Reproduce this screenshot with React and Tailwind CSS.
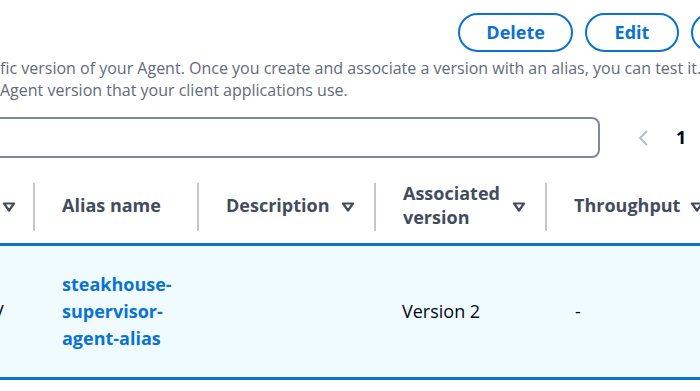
import React from "react";

const SortIcon = () => (
  <svg width="14" height="12" viewBox="0 0 14 12" className="shrink-0">
    <path
      d="M2 2.5 H12 L7 9.5 Z"
      fill="none"
      stroke="#414d5c"
      strokeWidth="2.2"
      strokeLinejoin="round"
    />
  </svg>
);

const Separator = () => <div className="w-[2px] h-[48px] bg-[#c6c6cd] shrink-0"></div>;

const HeaderCell = ({ width, children, sort = true }) => (
  <div className={`flex items-center h-full shrink-0 ${width}`}>
    <Separator />
    <div className="ml-[27px] flex-1 text-[18px] leading-[24px] font-bold text-[#414d5c] -mt-[3px]">
      {children}
    </div>
    {sort ? <SortIcon /> : <></>}
    <div className="w-[19px] shrink-0"></div>
  </div>
);

export default function App() {
  return (
    <div
      className="w-[700px] h-[391px] overflow-hidden bg-white"
      style={{ fontFamily: '"Open Sans", "Noto Sans", sans-serif' }}
    >
      <div className="w-[800px] flex flex-col">
        {/* action buttons */}
        <div className="flex items-center gap-[12px] pl-[458px] pt-[13px]">
          <button className="h-[39px] w-[116px] rounded-full border-2 border-[#0972d3] text-[#0972d3] font-bold text-[18px]">
            Delete
          </button>
          <button className="h-[39px] w-[94px] rounded-full border-2 border-[#0972d3] text-[#0972d3] font-bold text-[18px]">
            Edit
          </button>
          <button className="h-[39px] w-[110px] rounded-full border-2 border-[#0972d3] text-[#0972d3] font-bold text-[18px]">
            Create
          </button>
        </div>

        {/* description */}
        <div className="mt-[5px] text-[16px] leading-[22px] text-[#5f6b7a] whitespace-nowrap">
          <div>fic version of your Agent. Once you create and associate a version with an alias, you can test it.</div>
          <div>Agent version that your client applications use.</div>
        </div>

        {/* search + pagination */}
        <div className="flex items-center mt-[16px]">
          <div className="-ml-[20px] w-[620px] h-[41px] rounded-lg border-2 border-[#7d8998] shrink-0"></div>
          <svg width="12" height="18" viewBox="0 0 12 18" className="ml-[37px] shrink-0">
            <path d="M10 2 L3 9 L10 16" fill="none" stroke="#b6bec9" strokeWidth="2" />
          </svg>
          <span className="ml-[27px] text-[18px] font-bold text-[#000716]">1</span>
        </div>

        {/* table header */}
        <div className="flex items-center h-[73px] mt-[12px]">
          <div className="w-[33px] h-full flex items-center shrink-0">
            <div className="ml-[2px]">
              <SortIcon />
            </div>
          </div>
          <HeaderCell width="w-[164px]" sort={false}>Alias name</HeaderCell>
          <HeaderCell width="w-[177px]">Description</HeaderCell>
          <HeaderCell width="w-[171px]">
            Associated
            <br />
            version
          </HeaderCell>
          <HeaderCell width="w-[178px]">Throughput</HeaderCell>
        </div>

        {/* selected row */}
        <div className="flex items-center h-[137px] border-y-[3px] border-[#0972d3] bg-[#f0fbff] text-[18px] text-[#000716]">
          <div className="w-[33px] shrink-0 overflow-hidden">
            <span className="block -ml-[7px]">V</span>
          </div>
          <div className="w-[164px] shrink-0 pl-[29px] font-bold text-[#0972d3] leading-[27px]">
            <div>steakhouse-</div>
            <div>supervisor-</div>
            <div>agent-alias</div>
          </div>
          <div className="w-[177px] shrink-0"></div>
          <div className="w-[171px] shrink-0 pl-[28px]">Version 2</div>
          <div className="w-[200px] shrink-0 pl-[30px]">-</div>
        </div>
      </div>
    </div>
  );
}
